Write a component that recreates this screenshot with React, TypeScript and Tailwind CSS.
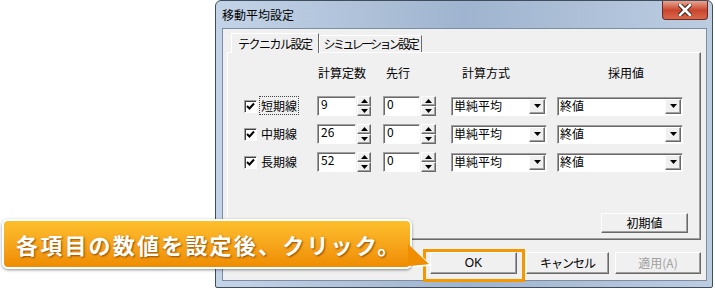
import React from "react";

const jp = "font-['MS_UI_Gothic','Noto_Sans_CJK_JP',sans-serif]";

function Raised({ className = "", children }: { className?: string; children?: React.ReactNode }) {
  return (
    <div
      className={`flex items-center justify-center bg-[#f0f0f0] border border-t-white border-l-white border-r-[#696969] border-b-[#696969] shadow-[inset_-1px_-1px_0_#a0a0a0] ${className}`}
    >
      {children}
    </div>
  );
}

function Sunken({ className = "", children }: { className?: string; children?: React.ReactNode }) {
  return (
    <div
      className={`bg-white border border-t-[#a0a0a0] border-l-[#a0a0a0] border-r-white border-b-white shadow-[inset_1px_1px_0_#696969] ${className}`}
    >
      {children}
    </div>
  );
}

function Arrow({ dir }: { dir: "up" | "down" }) {
  return (
    <svg width="7" height="4" viewBox="0 0 7 4">
      {dir === "up" ? <path d="M3.5 0 L7 4 L0 4 Z" fill="#000" /> : <path d="M0 0 L7 0 L3.5 4 Z" fill="#000" />}
    </svg>
  );
}

function Spin({ value, boxW, spinW }: { value: string; boxW: string; spinW: string }) {
  return (
    <div className="flex h-[20px]">
      <Sunken className={`${boxW} h-[20px] pl-[3px] text-[12px] leading-[14px] text-black`}>{value}</Sunken>
      <div className={`${spinW} ml-[1px] flex flex-col`}>
        <Raised className="h-[10px]">
          <Arrow dir="up" />
        </Raised>
        <Raised className="h-[10px]">
          <Arrow dir="down" />
        </Raised>
      </div>
    </div>
  );
}

function Combo({ value, w }: { value: string; w: string }) {
  return (
    <Sunken className={`${w} h-[19px] flex items-center pl-[2px] pr-[1px]`}>
      <span className="text-[12px] leading-none text-black">{value}</span>
      <Raised className="ml-auto w-[16px] h-[15px]">
        <Arrow dir="down" />
      </Raised>
    </Sunken>
  );
}

function Check() {
  return (
    <div className="w-[13px] h-[13px] bg-white border border-t-[#a0a0a0] border-l-[#a0a0a0] border-r-white border-b-white shadow-[inset_1px_1px_0_#404040] flex items-center justify-center">
      <svg width="9" height="9" viewBox="0 0 9 9">
        <path d="M1 4 L3.5 6.5 L8 1.5" stroke="#000" strokeWidth="2" fill="none" />
      </svg>
    </div>
  );
}

const rows = [
  { label: "短期線", a: "9", focus: true },
  { label: "中期線", a: "26", focus: false },
  { label: "長期線", a: "52", focus: false },
];

export default function App() {
  return (
    <div className={`relative w-[715px] h-[289px] bg-white overflow-hidden ${jp}`}>
      {/* window */}
      <div className="ml-[215px] w-[498px] h-[288px] rounded-t-[6px] rounded-b-[2px] border border-[#3f4d5d] bg-linear-to-r from-[#c4d4e8] via-[#9fb4ce] to-[#bccde2] flex flex-col">
        <div className="h-[27px] flex items-start">
          <span className="ml-[6px] mt-[7px] text-[12px] leading-[14px] text-black">移動平均設定</span>
          <div className="ml-auto mr-[4px] w-[46px] h-[19px] rounded-b-[4px] border border-t-0 border-[#6e2a20] bg-linear-to-b from-[#e6a593] via-[#c9452d] to-[#d9684a] flex items-center justify-center">
            <svg width="14" height="12" viewBox="0 0 14 12">
              <path d="M2 1 L12 11 M12 1 L2 11" stroke="#3a1d18" strokeWidth="4.5" strokeLinecap="square" />
              <path d="M2 1 L12 11 M12 1 L2 11" stroke="#fff" strokeWidth="2.6" strokeLinecap="square" />
            </svg>
          </div>
        </div>

        {/* client */}
        <div className="ml-[6px] w-[485px] h-[253px] border border-[#7d8ea3] bg-[#f0f0f0] flex flex-col px-[4px] pt-[3px]">
          {/* tabs */}
          <div className="flex items-end h-[20px] ml-[4px]">
            <div className="h-[20px] px-[6px] border border-b-0 border-t-white border-l-white border-r-[#696969] flex items-center text-[12px] tracking-[-1.5px] text-black bg-[#f0f0f0] relative top-[1px]">
              テクニカル設定
            </div>
            <div className="h-[17px] px-[4px] border border-b-0 border-t-white border-l-white border-r-[#696969] flex items-center text-[12px] tracking-[-2.6px] text-black">
              シミュレーション設定
            </div>
          </div>

          {/* panel */}
          <div className="w-[474px] h-[188px] border border-t-white border-l-white border-r-[#696969] border-b-[#696969] shadow-[inset_-1px_-1px_0_#a0a0a0] flex flex-col">
            <div className="flex h-[16px] mt-[12px] pl-[17px] text-[12px] leading-[16px] text-black">
              <span className="w-[73px]" />
              <span className="w-[68px]">計算定数</span>
              <span className="w-[66px]">先行</span>
              <span className="w-[130px] pl-[10px]">計算方式</span>
              <span className="pl-[26px]">採用値</span>
            </div>
            <div className="flex flex-col gap-[8px] mt-[15px]">
              {rows.map((r) => (
                <div key={r.label} className="flex items-center h-[20px] pl-[16px]">
                  <Check />
                  <span className="ml-[3px] w-[57px] text-[12px] leading-[14px] text-black">
                    <span className={r.focus ? "outline outline-1 outline-dotted outline-[#444] px-[1px]" : "px-[1px]"}>{r.label}</span>
                  </span>
                  <Spin value={r.a} boxW="w-[39px]" spinW="w-[14px]" />
                  <div className="ml-[12px]">
                    <Spin value="0" boxW="w-[37px]" spinW="w-[15px]" />
                  </div>
                  <div className="ml-[15px]">
                    <Combo value="単純平均" w="w-[96px]" />
                  </div>
                  <div className="ml-[10px]">
                    <Combo value="終値" w="w-[126px]" />
                  </div>
                </div>
              ))}
            </div>
            <Raised className="mt-auto self-end mr-[12px] mb-[6px] w-[87px] h-[20px] text-[12px] text-black">初期値</Raised>
          </div>

          {/* buttons */}
          <div className="flex mt-[12px] pl-[203px] text-[12px] text-black">
            <Raised className="w-[87px] h-[22px] font-['Liberation_Sans',sans-serif]">OK</Raised>
            <Raised className="ml-[9px] w-[83px] h-[22px] tracking-[-1px]">キャンセル</Raised>
            <Raised className="ml-[6px] w-[86px] h-[22px] text-[#a0a0a0]">適用(A)</Raised>
          </div>
        </div>
      </div>

      {/* highlight around OK */}
      <div className="absolute left-[423px] top-[249px] w-[102px] h-[33px] border-[3px] border-[#f39800]" />

      {/* callout */}
      <div className="absolute left-[2px] top-[219px] w-[430px] h-[50px]">
        <svg className="absolute left-[404px] top-[22px]" width="28" height="28" viewBox="0 0 28 28">
          <path d="M0 2 L24 24 L0 26 Z" fill="#f18f00" stroke="#fff" strokeWidth="2" />
        </svg>
        <div className="absolute left-0 top-0 w-[410px] h-[50px] rounded-[6px] border-2 border-white bg-linear-to-b from-[#fdbf2c] to-[#ef8c00] shadow-[0_1px_3px_rgba(0,0,0,0.45)] flex items-center pl-[12px]">
          <span className="text-[22px] font-bold leading-none tracking-[2.2px] text-white [text-shadow:1px_1px_2px_rgba(120,55,0,0.8)] font-['Noto_Sans_CJK_JP',sans-serif]">
            各項目の数値を設定後、クリック。
          </span>
        </div>
        <svg className="absolute left-[406px] top-[25px]" width="24" height="24" viewBox="0 0 24 24">
          <path d="M0 0 L21 20 L0 22 Z" fill="#f08d00" />
        </svg>
      </div>
    </div>
  );
}
